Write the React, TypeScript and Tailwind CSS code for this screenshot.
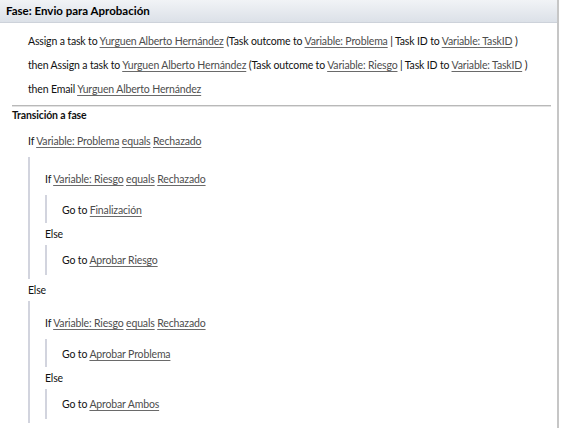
import React from 'react';

const Link: React.FC<{ children: React.ReactNode }> = ({ children }) => (
  <span className="text-[#4d4d4d] underline decoration-[#6a6a6a] underline-offset-[2px]">{children}</span>
);

const Line: React.FC<{ children: React.ReactNode; className?: string }> = ({ children, className = '' }) => (
  <div className={`h-[22px] leading-[22px] whitespace-nowrap ${className}`}>{children}</div>
);

const Block: React.FC<{ children: React.ReactNode; className?: string }> = ({ children, className = '' }) => (
  <div className={`border-l-2 border-[#d2d4de] pl-[15px] pt-[4px] ${className}`}>{children}</div>
);

const GoTo: React.FC<{ to: string }> = ({ to }) => (
  <Line>
    Go to <Link>{to}</Link>
  </Line>
);

const IfRiesgo: React.FC = () => (
  <Line className="mt-[7px]">
    If <Link>Variable: Riesgo</Link> <Link>equals</Link> <Link>Rechazado</Link>
  </Line>
);

export default function App() {
  return (
    <div className="w-[561px] h-[428px] bg-white overflow-hidden">
      <div
        className="w-[559px] h-[428px] border-r-2 border-[#c6c6c6] text-[10.5px] tracking-[-0.15px] text-[#111]"
        style={{ fontFamily: 'Lato, "Liberation Sans", sans-serif' }}
      >
        {/* header */}
        <div className="h-[23px] bg-gradient-to-b from-[#f1f3f6] to-[#dce1e8] border-b border-[#cdd2da] pl-[6px] leading-[22px] font-bold text-[11.5px] tracking-normal text-black">
          Fase: Envio para Aprobación
        </div>

        {/* actions */}
        <div className="pl-[28px] pt-[6px]">
          <div className="h-[24px] leading-[24px] whitespace-nowrap">
            Assign a task to <Link>Yurguen Alberto Hernández</Link> (Task outcome to <Link>Variable: Problema</Link> | Task ID to{' '}
            <Link>Variable: TaskID</Link> )
          </div>
          <div className="h-[24px] leading-[24px] whitespace-nowrap">
            then Assign a task to <Link>Yurguen Alberto Hernández</Link> (Task outcome to <Link>Variable: Riesgo</Link> | Task ID to{' '}
            <Link>Variable: TaskID</Link> )
          </div>
          <div className="h-[24px] leading-[24px] whitespace-nowrap">
            then Email <Link>Yurguen Alberto Hernández</Link>
          </div>
        </div>

        <div className="ml-[12px] w-[539px] mt-[4px] border-t border-b border-t-[#b9b9b9] border-b-[#e2e2e2]" />

        {/* transitions */}
        <div className="pl-[12px] h-[16px] leading-[16px] font-bold">Transición a fase</div>

        <div className="pl-[28px]">
          <Line className="mt-[7px]">
            If <Link>Variable: Problema</Link> <Link>equals</Link> <Link>Rechazado</Link>
          </Line>
          <Block className="mt-[5px] pb-[4px]">
            <IfRiesgo />
            <Block className="mt-[5px] pb-[2px]">
              <GoTo to="Finalización" />
            </Block>
            <Line>Else</Line>
            <Block className="pb-[4px]">
              <GoTo to="Aprobar Riesgo" />
            </Block>
          </Block>
          <Line>Else</Line>
          <Block className="pb-[4px]">
            <IfRiesgo />
            <Block className="mt-[5px] pb-[2px]">
              <GoTo to="Aprobar Problema" />
            </Block>
            <Line>Else</Line>
            <Block className="pb-[4px]">
              <GoTo to="Aprobar Ambos" />
            </Block>
          </Block>
        </div>
      </div>
    </div>
  );
}
